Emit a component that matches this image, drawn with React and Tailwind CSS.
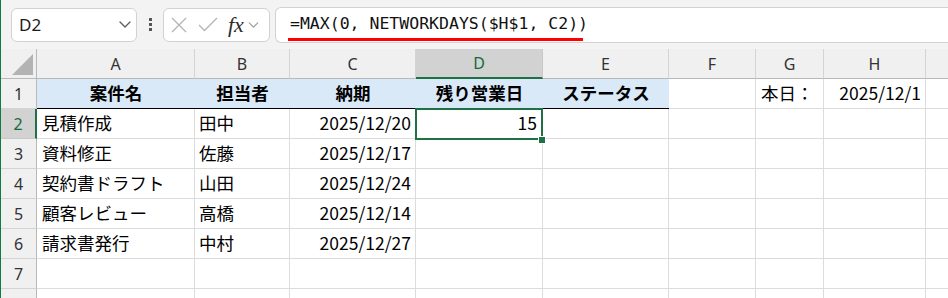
import React from "react";

// column widths follow the sheet's pixel grid
const COLS = [
  { id: "A", w: "w-[158px]" },
  { id: "B", w: "w-[95px]" },
  { id: "C", w: "w-[126px]" },
  { id: "D", w: "w-[127px]" },
  { id: "E", w: "w-[126px]" },
  { id: "F", w: "w-[87px]" },
  { id: "G", w: "w-[68px]" },
  { id: "H", w: "w-[102px]" },
  { id: "I", w: "w-[60px]", hidden: true },
];

const TASKS = [
  ["見積作成", "田中", "2025/12/20"],
  ["資料修正", "佐藤", "2025/12/17"],
  ["契約書ドラフト", "山田", "2025/12/24"],
  ["顧客レビュー", "高橋", "2025/12/14"],
  ["請求書発行", "中村", "2025/12/27"],
];

const HEADERS = ["案件名", "担当者", "納期", "残り営業日", "ステータス"];

function Chevron({ className, color = "#5a5a5a" }) {
  return (
    <svg viewBox="0 0 12 7" className={className} fill="none">
      <path d="M1 1l5 5 5-5" stroke={color} strokeWidth="1.3" strokeLinecap="round" strokeLinejoin="round" />
    </svg>
  );
}

function TopBar() {
  return (
    <div className="h-[49px] bg-[#f3f3f3] flex items-center pl-[10px]">
      {/* Name box */}
      <div className="w-[126px] h-[34px] bg-white border border-[#d2d2d2] rounded-[6px] flex items-center justify-between pl-[7px] pr-[5px]">
        <span className="text-[17px] text-[#1b1b1b] font-[family-name:Noto_Sans,sans-serif] leading-none">D2</span>
        <Chevron className="w-[12px] h-[7px]" />
      </div>

      {/* grip */}
      <div className="w-[26px] flex flex-col items-center gap-[2px]">
        <span className="w-[3px] h-[3px] bg-[#555]" />
        <span className="w-[3px] h-[3px] bg-[#555]" />
        <span className="w-[3px] h-[3px] bg-[#555]" />
      </div>

      {/* cancel / enter / fx */}
      <div className="w-[107px] h-[34px] bg-white border border-[#d2d2d2] rounded-[6px] flex items-center pl-[7px]">
        <svg viewBox="0 0 16 16" className="w-[16px] h-[16px]" fill="none">
          <path d="M1 1l14 14M15 1L1 15" stroke="#b4b4b4" strokeWidth="1.3" />
        </svg>
        <svg viewBox="0 0 20 15" className="w-[20px] h-[15px] ml-[11px]" fill="none">
          <path d="M1 8l5.5 5.5L19 1" stroke="#b4b4b4" strokeWidth="1.3" />
        </svg>
        <span className="ml-[10px] italic text-[22px] leading-none text-[#2b2b2b] font-[family-name:Liberation_Serif,serif]">fx</span>
        <Chevron className="w-[11px] h-[6px] ml-[4px]" color="#9a9a9a" />
      </div>

      {/* Formula box */}
      <div className="relative ml-[5px] flex-1 h-[36px] bg-white border border-r-0 border-[#d2d2d2] rounded-l-[6px] flex items-center pl-[14px]">
        <span className="text-[16.5px] text-[#111] leading-none font-[family-name:DejaVu_Sans_Mono,monospace] whitespace-nowrap">
          =MAX(0, NETWORKDAYS($H$1, C2))
        </span>
        <div className="absolute left-[12px] top-[30px] w-[295px] h-[3px] bg-[#ff0000]" />
      </div>
    </div>
  );
}

function ColumnHeader() {
  return (
    <div className="flex h-[30px]">
      <div className="w-[36px] shrink-0 bg-[#f0f0f0] border-r border-b border-[#b8b8b8] relative">
        <svg viewBox="0 0 21 21" className="absolute right-[3px] bottom-[3px] w-[21px] h-[21px]">
          <polygon points="21,0 21,21 0,21" fill="#b3b3b3" />
        </svg>
      </div>
      {COLS.map((c) =>
        c.id === "D" ? (
          <div
            key={c.id}
            className={`${c.w} shrink-0 bg-[#d2d2d2] border-r border-[#c8c8c8] border-b-2 border-b-[#1e7145] flex items-center justify-center text-[16px] text-[#0f6b3a] font-[family-name:Noto_Sans,sans-serif]`}
          >
            {c.id}
          </div>
        ) : (
          <div
            key={c.id}
            className={`${c.w} shrink-0 bg-[#f0f0f0] border-r border-[#d4d4d4] border-b border-b-[#b8b8b8] flex items-center justify-center text-[16px] text-[#333] font-[family-name:Noto_Sans,sans-serif]`}
          >
            {c.hidden ? null : c.id}
          </div>
        )
      )}
    </div>
  );
}

function RowNum({ n, selected }) {
  return selected ? (
    <div className="w-[36px] shrink-0 h-[30px] bg-[#d2d2d2] border-b border-[#c8c8c8] border-r-2 border-r-[#1e7145] flex items-center justify-center text-[16px] text-[#0f6b3a] font-[family-name:Noto_Sans,sans-serif]">
      {n}
    </div>
  ) : (
    <div className="w-[36px] shrink-0 h-[30px] bg-[#f0f0f0] border-b border-[#d4d4d4] border-r border-r-[#b8b8b8] flex items-center justify-center text-[16px] text-[#333] font-[family-name:Noto_Sans,sans-serif]">
      {n}
    </div>
  );
}

function Cell({ w, align = "left", className = "", children }) {
  const justify = align === "right" ? "justify-end" : align === "center" ? "justify-center" : "justify-start";
  return (
    <div className={`${w} shrink-0 h-[30px] border-r border-b border-[#dcdcdc] flex items-center px-[4px] whitespace-nowrap overflow-visible ${justify} ${className}`}>
      {children}
    </div>
  );
}

export default function App() {
  return (
    <div className="w-[948px] h-[298px] overflow-hidden bg-white border-l border-[#107c41] text-black text-[17.5px] font-[family-name:Noto_Sans_CJK_JP,sans-serif]">
      <TopBar />
      <ColumnHeader />

      {/* Row 1: headers */}
      <div className="flex">
        <RowNum n={1} />
        {HEADERS.map((h, i) => (
          <div
            key={h}
            className={`${COLS[i].w} shrink-0 h-[30px] bg-[#dae9f8] border-b border-black flex items-center justify-center font-bold`}
          >
            {h}
          </div>
        ))}
        <Cell w={COLS[5].w} />
        <Cell w={COLS[6].w} className="pl-[5px]">本日：</Cell>
        <Cell w={COLS[7].w} align="right">2025/12/1</Cell>
        <Cell w={COLS[8].w} />
      </div>

      {/* Rows 2-6: tasks */}
      {TASKS.map(([name, owner, due], r) => (
        <div key={name} className="flex">
          <RowNum n={r + 2} selected={r === 0} />
          <Cell w={COLS[0].w} className="pl-[5px]">{name}</Cell>
          <Cell w={COLS[1].w}>{owner}</Cell>
          <Cell w={COLS[2].w} align="right">{due}</Cell>
          {r === 0 ? (
            <Cell w={COLS[3].w} align="right" className="relative pr-[5px]">
              15
              <div className="absolute -left-[1px] -top-[1px] w-[128px] h-[32px] border-2 border-[#1e7145] pointer-events-none" />
              <div className="absolute left-[122px] top-[27px] w-[8px] h-[8px] bg-[#1e7145] border border-white" />
            </Cell>
          ) : (
            <Cell w={COLS[3].w} />
          )}
          {COLS.slice(4).map((c) => (
            <Cell key={c.id} w={c.w} />
          ))}
        </div>
      ))}

      {/* Row 7 and the top of row 8 (its number is below the fold) */}
      <div className="flex">
        <RowNum n={7} />
        {COLS.map((c) => (
          <Cell key={c.id} w={c.w} />
        ))}
      </div>
      <div className="flex">
        <RowNum n="" />
        {COLS.map((c) => (
          <Cell key={c.id} w={c.w} />
        ))}
      </div>
    </div>
  );
}
